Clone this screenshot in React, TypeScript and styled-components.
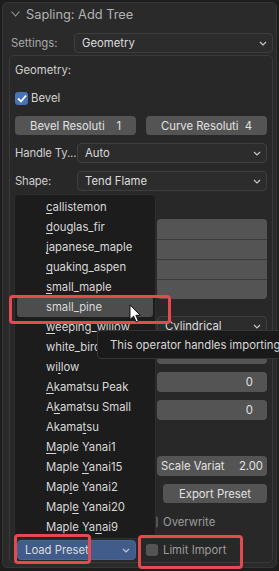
import React from 'react'
import styled, { createGlobalStyle } from 'styled-components'

const GlobalStyle = createGlobalStyle`
  html, body {
    margin: 0;
    padding: 0;
    background: #1d1d1d;
  }
  body {
    width: 279px;
    height: 571px;
    overflow: hidden;
    font-family: Inter, "DejaVu Sans", sans-serif;
    font-size: 11.3px;
    color: #d4d4d4;
  }
  * { box-sizing: border-box; }
`

const Screen = styled.div`
  position: relative;
  width: 279px;
  height: 571px;
  overflow: hidden;
  padding: 2px 2px 0 2px;
`

const Panel = styled.div`
  border: 1px solid #363636;
  border-radius: 5px;
  background: #2a2a2a;
  padding: 0 3px 4px 6px;
`

const Header = styled.div`
  height: 22px;
  display: flex;
  align-items: center;
  gap: 6px;
  padding-left: 2px;
  color: #b2b2b2;
  font-size: 12.8px;
`

const LabelRow = styled.div<{ $label: number }>`
  display: grid;
  grid-template-columns: ${(p) => p.$label}px 1fr;
  column-gap: 6px;
  align-items: center;
  height: 20px;
`

const SettingsRow = styled(LabelRow)`
  margin-top: 8px;
  column-gap: 0;
  padding-left: 2px;
  color: #a8a8a8;
`

const Label = styled.span`
  color: #cfcfcf;
  white-space: nowrap;
  letter-spacing: -0.15px;
`

const Dropdown = styled.div<{ $active?: boolean }>`
  height: 20px;
  display: flex;
  align-items: center;
  justify-content: space-between;
  padding: 0 5px 0 7px;
  border-radius: 4px;
  background: ${(p) => (p.$active ? '#415b8b' : '#2c2c2c')};
  border: 1px solid ${(p) => (p.$active ? '#4a6598' : '#3e3e3e')};
  color: #dcdcdc;
  white-space: nowrap;
`

const Box = styled.div`
  margin-top: 2px;
  border: 1px solid #3a3a3a;
  border-radius: 5px;
  background: #282828;
  padding: 4px 5px 2px 5px;
  display: flex;
  flex-direction: column;
  gap: 8px;
`

const Heading = styled.div`
  height: 20px;
  display: flex;
  align-items: center;
  color: #d0d0d0;
`

const CheckRow = styled.div<{ $dim?: boolean; $indent?: number }>`
  height: 20px;
  display: flex;
  align-items: center;
  gap: ${(p) => (p.$dim ? 5 : 3)}px;
  padding-left: ${(p) => p.$indent ?? 0}px;
  color: ${(p) => (p.$dim ? '#9c9c9c' : '#d4d4d4')};
`

const Check = styled.span<{ $on?: boolean; $size: number }>`
  width: ${(p) => p.$size}px;
  height: ${(p) => p.$size}px;
  border-radius: 3px;
  background: ${(p) => (p.$on ? '#4772b3' : '#545454')};
  display: flex;
  align-items: center;
  justify-content: center;
  flex-shrink: 0;
`

const Pair = styled.div`
  display: grid;
  grid-template-columns: 1fr 1fr;
  column-gap: 10px;
`

const NumField = styled.div<{ $pad: number; $h?: number }>`
  height: ${(p) => p.$h ?? 19}px;
  display: flex;
  align-items: center;
  justify-content: space-between;
  padding: 0 ${(p) => p.$pad}px;
  background: #545454;
  border-radius: 4px;
  color: #e2e2e2;
  white-space: nowrap;
`

const Split = styled.div<{ $mt?: number; $h?: number }>`
  display: grid;
  grid-template-columns: 1fr 110px;
  column-gap: 7px;
  margin-top: ${(p) => p.$mt ?? 0}px;
  min-height: ${(p) => p.$h ?? 20}px;
`

const Stack = styled.div`
  display: flex;
  flex-direction: column;
  border-radius: 4px;
  overflow: hidden;
`

const StackCell = styled.div`
  height: 20px;
  background: #545454;
  & + & {
    border-top: 1px solid #3b3b3b;
  }
`

const ExportButton = styled.div`
  height: 19px;
  margin-left: 6px;
  border-radius: 4px;
  background: #545454;
  color: #e2e2e2;
  display: flex;
  align-items: center;
  justify-content: center;
`

const BottomRow = styled.div`
  display: grid;
  grid-template-columns: 119px 1fr;
  column-gap: 9px;
  padding-left: 2px;
  height: 20px;
`

const Menu = styled.div`
  position: absolute;
  left: 14px;
  top: 194px;
  width: 142px;
  height: 345px;
  background: #1c1c1c;
  border: 1px solid #2e2e2e;
  border-radius: 5px;
  padding: 2px;
`

const MenuItem = styled.div<{ $hot?: boolean }>`
  height: 20px;
  display: flex;
  align-items: center;
  padding-left: 29px;
  border-radius: 3px;
  background: ${(p) => (p.$hot ? '#4d4d4d' : 'transparent')};
  color: #d8d8d8;
  white-space: pre;
`

const Key = styled.span`
  text-decoration: underline;
  text-decoration-thickness: 1px;
  text-underline-offset: 2px;
`

const Tooltip = styled.div`
  position: absolute;
  left: 97px;
  top: 330px;
  height: 29px;
  padding: 0 30px 0 12px;
  display: flex;
  align-items: center;
  background: #1a1a1a;
  border: 1px solid #343434;
  border-radius: 4px;
  color: #d8d8d8;
  white-space: nowrap;
`

const Mark = styled.div<{ $x: number; $y: number; $w: number; $h: number }>`
  position: absolute;
  left: ${(p) => p.$x}px;
  top: ${(p) => p.$y}px;
  width: ${(p) => p.$w}px;
  height: ${(p) => p.$h}px;
  border: 3px solid #e44a50;
  border-radius: 4px;
`

const Cursor = styled.svg`
  position: absolute;
  left: 129px;
  top: 304px;
`

const Chevron = () => (
  <svg width="8" height="5" viewBox="0 0 8 5">
    <polyline points="1,1 4,4 7,1" fill="none" stroke="#c8c8c8" strokeWidth="1.2" />
  </svg>
)

const presets: { name: string; key?: number; hot?: boolean }[] = [
  { name: 'callistemon', key: 0 },
  { name: 'douglas_fir', key: 0 },
  { name: 'japanese_maple', key: 0 },
  { name: 'quaking_aspen', key: 0 },
  { name: 'small_maple', key: 0 },
  { name: 'small_pine', hot: true },
  { name: 'weeping_willow', key: 0 },
  { name: 'white_birch' },
  { name: 'willow', key: 2 },
  { name: 'Akamatsu Peak', key: 0 },
  { name: 'Akamatsu Small', key: 1 },
  { name: 'Akamatsu', key: 5 },
  { name: 'Maple Yanai1', key: 0 },
  { name: 'Maple Yanai15', key: 6 },
  { name: 'Maple Yanai2', key: 3 },
  { name: 'Maple Yanai20', key: 4 },
  { name: 'Maple Yanai9', key: 8 },
]

const ItemText = ({ name, k }: { name: string; k?: number }) => {
  if (k === undefined) return <span>{name}</span>
  return (
    <span>
      {name.slice(0, k)}
      <Key>{name[k]}</Key>
      {name.slice(k + 1)}
    </span>
  )
}

const App = () => {
  return (
    <Screen>
      <GlobalStyle />
      <Panel>
        <Header>
          <svg width="9" height="6" viewBox="0 0 9 6">
            <polyline points="0.5,0.5 4.5,5 8.5,0.5" fill="none" stroke="#9a9a9a" strokeWidth="1.1" />
          </svg>
          Sapling: Add Tree
        </Header>
        <SettingsRow $label={63}>
          <span>Settings:</span>
          <Dropdown>
            Geometry
            <Chevron />
          </Dropdown>
        </SettingsRow>
        <Box>
          <Heading>Geometry:</Heading>
          <CheckRow>
            <Check $on $size={13}>
              <svg width="10" height="9" viewBox="0 0 10 9">
                <polyline points="1,4.5 4,7.5 9,1.5" fill="none" stroke="#fff" strokeWidth="1.8" />
              </svg>
            </Check>
            Bevel
          </CheckRow>
          <Pair>
            <NumField $pad={15}>
              <span>Bevel Resoluti</span>
              <span>1</span>
            </NumField>
            <NumField $pad={15}>
              <span>Curve Resoluti</span>
              <span>4</span>
            </NumField>
          </Pair>
          <LabelRow $label={56}>
            <Label>Handle Ty...</Label>
            <Dropdown>
              Auto
              <Chevron />
            </Dropdown>
          </LabelRow>
          <LabelRow $label={56}>
            <Label>Shape:</Label>
            <Dropdown>
              Tend Flame
              <Chevron />
            </Dropdown>
          </LabelRow>
          <Split $h={12} />
          <Split $h={80}>
            <div />
            <Stack>
              <StackCell />
              <StackCell />
              <StackCell />
              <StackCell />
            </Stack>
          </Split>
          <Split $mt={9}>
            <div />
            <Dropdown>
              Cylindrical
              <Chevron />
            </Dropdown>
          </Split>
          <Split>
            <div />
            <NumField $pad={14} $h={20} />
          </Split>
          <Split>
            <div />
            <NumField $pad={14} $h={20}>
              <span />
              <span>0</span>
            </NumField>
          </Split>
          <Split>
            <div />
            <NumField $pad={14} $h={20}>
              <span />
              <span>0</span>
            </NumField>
          </Split>
          <Split />
          <Split>
            <div />
            <NumField $pad={4} $h={20}>
              <span>Scale Variat</span>
              <span>2.00</span>
            </NumField>
          </Split>
          <Split>
            <div />
            <ExportButton>Export Preset</ExportButton>
          </Split>
          <BottomRow>
            <div />
            <CheckRow $dim $indent={1}>
              <Check $size={12} />
              Overwrite
            </CheckRow>
          </BottomRow>
          <BottomRow>
            <Dropdown $active>
              Load Preset
              <Chevron />
            </Dropdown>
            <CheckRow $dim $indent={1}>
              <Check $size={12} />
              Limit Import
            </CheckRow>
          </BottomRow>
        </Box>
      </Panel>

      <Menu>
        {presets.map((p) => (
          <MenuItem key={p.name} $hot={p.hot}>
            <ItemText name={p.name} k={p.key} />
          </MenuItem>
        ))}
      </Menu>

      <Tooltip>This operator handles importing</Tooltip>

      <Mark $x={9} $y={295} $w={162} $h={29} />
      <Mark $x={14} $y={534} $w={77} $h={30} />
      <Mark $x={138} $y={535} $w={105} $h={34} />

      <Cursor width="12" height="19" viewBox="0 0 12 19">
        <path
          d="M1 1 L1 15.5 L4.6 12.2 L7.2 18 L9.4 17 L6.9 11.3 L11.2 11.3 Z"
          fill="#ffffff"
          stroke="#111"
          strokeWidth="1"
          strokeLinejoin="round"
        />
      </Cursor>
    </Screen>
  )
}

export default App
